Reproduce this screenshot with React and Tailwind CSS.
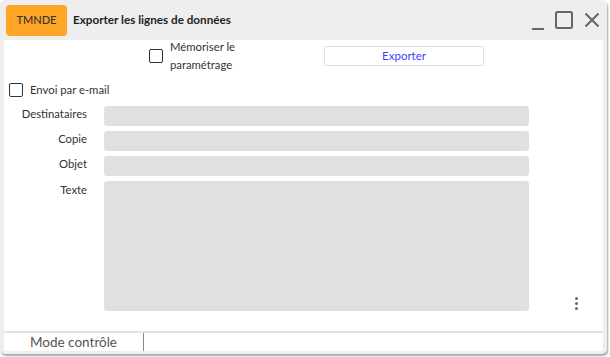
import React from 'react';

const fields = [
  { label: 'Destinataires', h: 'h-[20px]' },
  { label: 'Copie', h: 'h-[20px]' },
  { label: 'Objet', h: 'h-[20px]' },
];

function Checkbox() {
  return <span className="block w-[14px] h-[14px] rounded-[2px] border-[1.5px] border-[#333333] bg-white shrink-0" />;
}

export default function App() {
  return (
    <div className="w-[610px] h-[357px] bg-white" style={{ fontFamily: 'Lato, "Open Sans", sans-serif' }}>
      <div className="w-[607px] h-[354px] rounded-[5px] bg-[#eeeeee] shadow-[1px_2px_2px_rgba(0,0,0,0.35)] flex flex-col px-[4px] pb-[3px]">
        {/* Title bar */}
        <div className="h-[40px] flex items-center pl-[2px] pr-[5px] shrink-0">
          <div className="w-[61px] h-[31px] rounded-[4px] bg-[#ffa526] flex items-center justify-center text-[11px] font-medium text-[#333333]">
            TMNDE
          </div>
          <h1 className="ml-[6px] text-[11.7px] font-bold text-[#222222]">Exporter les lignes de données</h1>
          <div className="ml-auto flex items-center text-[#666666] mr-[-2px]">
            <svg width="14" height="18" viewBox="0 0 14 18" className="mt-[4px]">
              <path d="M1 16h12" stroke="currentColor" strokeWidth="2" />
            </svg>
            <svg width="18" height="18" viewBox="0 0 18 18" className="ml-[10px]">
              <rect x="1" y="1" width="16" height="16" rx="1.5" fill="none" stroke="currentColor" strokeWidth="2" />
            </svg>
            <svg width="16" height="16" viewBox="0 0 16 16" className="ml-[11px]">
              <path d="M1.5 1.5l13 13M14.5 1.5l-13 13" stroke="currentColor" strokeWidth="2" />
            </svg>
          </div>
        </div>

        {/* Body */}
        <div className="flex-1 bg-white flex flex-col text-[11.3px] text-[#333333]">
          <div className="h-[32px] flex items-center">
            <div className="ml-[145px] flex items-center">
              <Checkbox />
              <span className="ml-[7px] leading-[18px] w-[90px]">Mémoriser le paramétrage</span>
            </div>
            <button className="ml-[64px] w-[160px] h-[20px] border border-[#dddddd] rounded-[2px] bg-white text-[11.5px] text-[#3d3dff]">
              Exporter
            </button>
          </div>

          <div className="mt-[11px] flex items-center pl-[5px] h-[14px]">
            <Checkbox />
            <span className="ml-[7px]">Envoi par e-mail</span>
          </div>

          <div className="mt-[9px] flex flex-col gap-[5px]">
            {fields.map((f) => (
              <div key={f.label} className="flex items-start">
                <span className="w-[83px] text-right leading-[16px]">{f.label}</span>
                <div className={`ml-[17px] w-[425px] ${f.h} rounded-[3px] bg-[#e0e0e0]`} />
              </div>
            ))}
            <div className="flex items-start">
              <span className="w-[83px] text-right leading-[18px]">Texte</span>
              <div className="ml-[17px] w-[425px] h-[130px] rounded-[3px] bg-[#e0e0e0]" />
              <div className="ml-[46px] self-end flex flex-col gap-[2px] mb-[1px]">
                <span className="block w-[3px] h-[3px] rounded-full bg-[#666666]" />
                <span className="block w-[3px] h-[3px] rounded-full bg-[#666666]" />
                <span className="block w-[3px] h-[3px] rounded-full bg-[#666666]" />
              </div>
            </div>
          </div>

          {/* Footer */}
          <div className="mt-auto border-t-2 border-[#e3e3e3] h-[20px] flex items-stretch">
            <div className="w-[140px] border-r border-[#888888] flex items-center justify-center text-[13.5px] text-[#555555]">
              Mode contrôle
            </div>
          </div>
        </div>
      </div>
    </div>
  );
}
